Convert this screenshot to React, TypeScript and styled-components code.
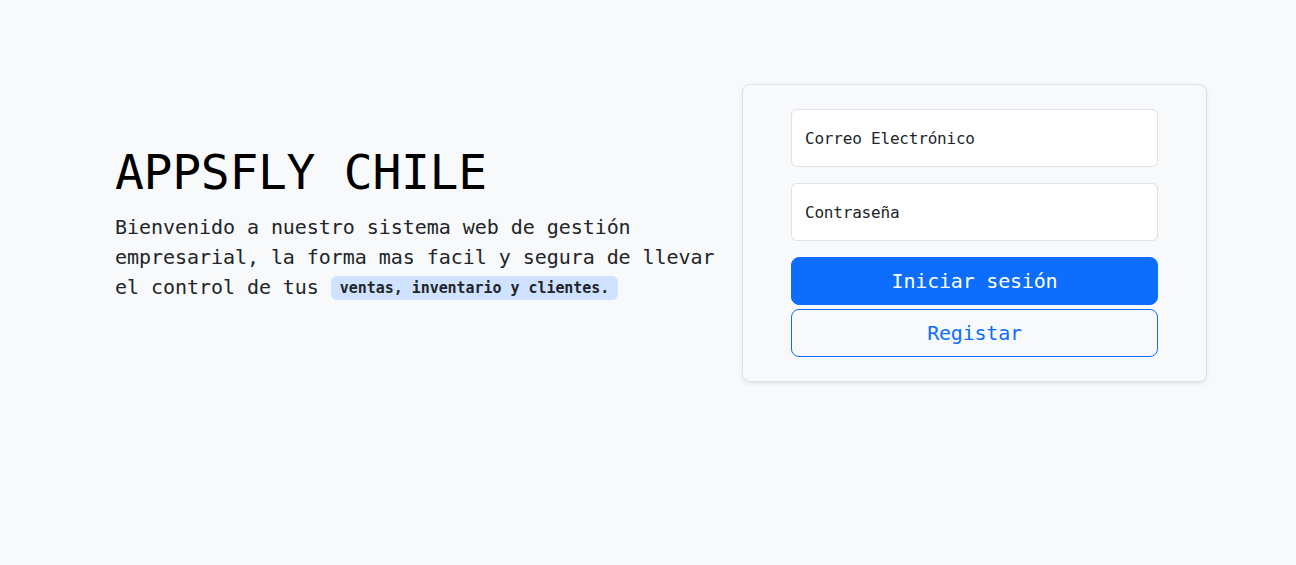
import React from 'react'
import styled, { createGlobalStyle } from 'styled-components'

const GlobalStyle = createGlobalStyle`
  html, body {
    margin: 0;
    padding: 0;
    background: #f8f9fa;
    color: #212529;
    font-family: "DejaVu Sans Mono", "Liberation Mono", monospace;
  }
`

const Page = styled.div`
  min-height: 565px;
  box-sizing: border-box;
  padding-top: 84px;
`

const Container = styled.div`
  width: 1140px;
  margin: 0 auto;
  box-sizing: border-box;
  padding: 0 11px 0 37px;
  display: grid;
  grid-template-columns: 1fr 465px;
  align-items: center;
`

const Intro = styled.div`
  padding-right: 12px;
`

const Title = styled.h1`
  margin: 0 0 16px;
  font-size: 48px;
  line-height: 1;
  font-weight: 400;
  color: #000;
  letter-spacing: -0.3px;
`

const Lead = styled.p`
  margin: 0 0 16px;
  font-size: 20px;
  line-height: 30px;
  color: #212529;
  letter-spacing: -0.05px;
`

const Badge = styled.span`
  display: inline-block;
  padding: 5px 9px;
  border-radius: 6px;
  background: #cfe2ff;
  color: #212529;
  font-size: 15px;
  line-height: 14px;
  font-weight: 700;
  letter-spacing: -0.05px;
  vertical-align: 1px;
`

const Card = styled.form`
  margin: 0;
  padding: 24px 48px;
  border: 1px solid #dee2e6;
  border-radius: 8px;
  background: #f8f9fa;
  box-shadow: 0 2px 4px rgba(0, 0, 0, 0.075);
  display: flex;
  flex-direction: column;
`

const Field = styled.input`
  box-sizing: border-box;
  width: 100%;
  height: 58px;
  margin-bottom: 16px;
  padding: 0 13px;
  border: 1px solid #dee2e6;
  border-radius: 6px;
  background: #fff;
  font-family: inherit;
  font-size: 16px;
  color: #212529;
  outline: none;
  letter-spacing: -0.2px;

  &::placeholder {
    color: #212529;
    opacity: 1;
  }
`

const Button = styled.button<{ $outline?: boolean }>`
  box-sizing: border-box;
  width: 100%;
  height: 48px;
  border-radius: 8px;
  border: 1px solid #0d6efd;
  background: ${p => (p.$outline ? 'transparent' : '#0d6efd')};
  color: ${p => (p.$outline ? '#0d6efd' : '#fff')};
  font-family: inherit;
  font-size: 20px;
  font-weight: ${p => (p.$outline ? 400 : 500)};
  letter-spacing: -0.2px;
  cursor: pointer;
  margin-top: ${p => (p.$outline ? '4px' : '0')};
`

export default function App() {
  return (
    <Page>
      <GlobalStyle />
      <Container>
        <Intro>
          <Title>APPSFLY CHILE</Title>
          <Lead>
            Bienvenido a nuestro sistema web de gestión empresarial, la forma mas facil y segura de llevar el
            control de tus <Badge>ventas, inventario y clientes.</Badge>
          </Lead>
        </Intro>
        <Card onSubmit={e => e.preventDefault()}>
          <Field type="email" placeholder="Correo Electrónico" />
          <Field type="password" placeholder="Contraseña" />
          <Button type="submit">Iniciar sesión</Button>
          <Button type="button" $outline>Registar</Button>
        </Card>
      </Container>
    </Page>
  )
}
